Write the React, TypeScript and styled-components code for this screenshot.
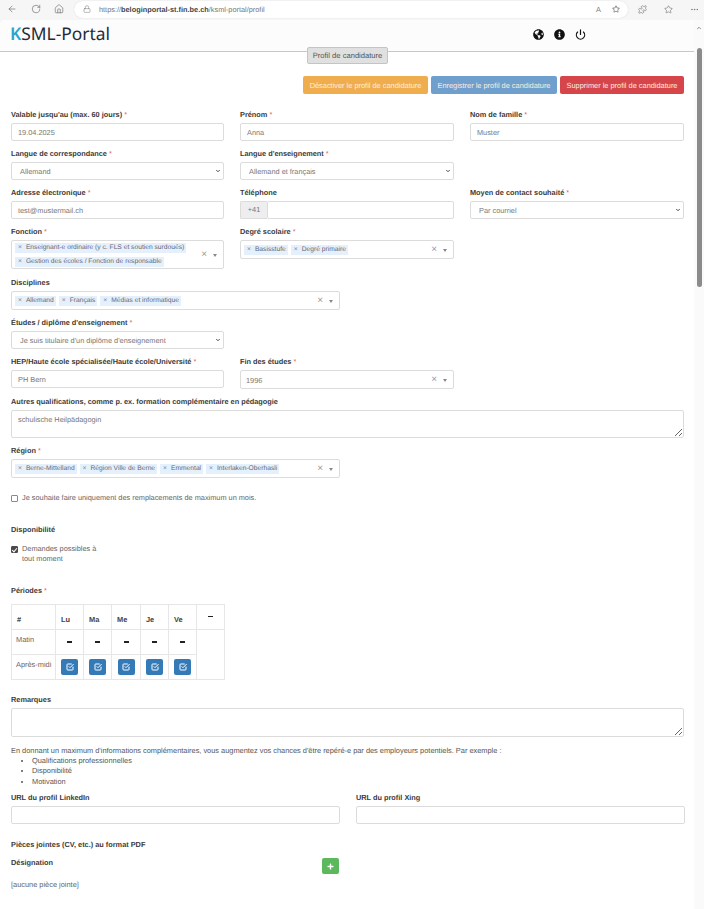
import React from "react";
import styled, { createGlobalStyle } from "styled-components";
import { ArrowLeft, RotateCw, Home, Lock, Star, MoreHorizontal, Puzzle, Power, ChevronUp, ChevronDown } from "lucide-react";
import { FaGlobeAmericas, FaInfoCircle, FaPlus, FaRegStar } from "react-icons/fa";
import { FiCheckSquare } from "react-icons/fi";

const GlobalStyle = createGlobalStyle`
  html, body { margin: 0; padding: 0; background: #f6f6f6; }
  body { font-family: "Liberation Sans", Arial, sans-serif; color: #555; width: 704px; height: 909px; overflow: hidden; }
  * { box-sizing: border-box; text-rendering: geometricPrecision; }
`;
const BrowserBar = styled.div`
  height: 20px;
  display: flex;
  align-items: center;
  padding: 0 0 2px 7px;
  color: #666;
  background: #f6f6f6;
`;
const NavIcons = styled.div`
  display: flex;
  gap: 13.5px;
  width: 67px;
  flex: none;
  svg { width: 10px; height: 10px; }
`;
const UrlBar = styled.div`
  width: 554px;
  height: 17px;
  flex: none;
  border-radius: 9px;
  background: #fff;
  box-shadow: 0 0 1px #ccc;
  display: flex;
  align-items: center;
  padding: 0 8px 0 9px;
  font-size: 7.35px;
  color: #777;
  svg { width: 8px; height: 8px; }
`;
const UrlText = styled.span`
  margin-left: 8px;
  flex: 1;
  b { color: #444; font-weight: 700; }
`;
const UrlRight = styled.div`
  display: flex;
  gap: 11px;
  align-items: center;
`;
const BarTools = styled.div`
  display: flex;
  gap: 17px;
  margin-left: 10px;
  flex: none;
  svg { width: 9px; height: 9px; }
`;
const Shell = styled.div`
  display: flex;
  height: 889px;
`;
const Page = styled.div`
  flex: 1;
  background: #fff;
  border-top-left-radius: 5px;
  min-width: 0;
`;
const Scrollbar = styled.div`
  width: 10px;
  background: #fafafa;
  padding: 5px 2px 0 3px;
  color: #666;
  svg { display: block; width: 6px; height: 6px; margin: 0 0 17px -1px; }
`;
const Thumb = styled.div`
  width: 5px;
  height: 239px;
  border-radius: 3px;
  background: #8b8b8b;
`;
const Header = styled.header`
  height: 32px;
  background: #fcfcfc;
  border-bottom: 1px solid #c8c8c8;
  display: flex;
  align-items: center;
  padding: 0 0 1px 10px;
  border-top-left-radius: 5px;
`;
const Logo = styled.div`
  font-family: "Noto Sans", sans-serif;
  font-size: 17.4px;
  color: #1f2b3c;
  width: 523px;
  line-height: 1;
  span { color: #29a6cf; font-weight: 600; }
`;
const HeaderIcons = styled.div`
  display: flex;
  gap: 10px;
  margin-top: -2px;
  color: #111;
  svg { width: 11px; height: 11px; display: block; }
`;
const TabRow = styled.div`
  display: flex;
  justify-content: center;
  margin-top: -5px;
  padding-left: 1px;
`;
const Tab = styled.div`
  width: 81px;
  height: 17px;
  border: 1px solid #c4c4c4;
  border-radius: 2px;
  background: #e0e0e0;
  font-size: 7.6px;
  line-height: 15px;
  text-align: center;
  color: #555;
`;
const Actions = styled.div`
  display: flex;
  justify-content: flex-end;
  gap: 3px;
  padding-right: 10px;
  margin: 12px 0 17px;
`;
const ActionButton = styled.button<{ $bg: string; $w: number }>`
  width: ${({ $w }) => $w}px;
  height: 18px;
  border: 0;
  border-radius: 2px;
  padding: 0;
  background: ${({ $bg }) => $bg};
  color: #fbeee0;
  white-space: nowrap;
  font: 7.4px "Liberation Sans", Arial, sans-serif;
`;
const Form = styled.div`
  padding: 0 10px 0 11px;
`;
const Row = styled.div<{ $cols?: string; $mb?: number }>`
  display: grid;
  grid-template-columns: ${({ $cols }) => $cols || "213px 214px 214px"};
  column-gap: 16px;
  margin-bottom: ${({ $mb }) => $mb ?? 9}px;
  align-items: start;
`;
const Field = styled.div`
  min-width: 0;
`;
const Label = styled.div`
  font-size: 7.35px;
  line-height: 8px;
  height: 8px;
  margin-bottom: 4px;
  font-weight: 700;
  color: #3a3a3a;
  white-space: nowrap;
`;
const Req = styled.span`
  color: #d9534f;
  font-weight: 400;
`;
const inputCss = `
  width: 100%;
  height: 18px;
  border: 1px solid #dcdcdc;
  border-radius: 2px;
  background: #fff;
  padding: 0 6px;
  font: 7.35px "Liberation Sans", Arial, sans-serif;
  color: #777;
  display: block;
  outline: none;
`;
const Input = styled.input`
  ${inputCss}
`;
const SelectWrap = styled.div`
  position: relative;
  svg {
    position: absolute;
    right: 3px;
    top: 6px;
    width: 6px;
    height: 6px;
    color: #333;
    pointer-events: none;
  }
`;
const Select = styled.select`
  ${inputCss}
  appearance: none;
  padding: 0 8px;
`;
const Area = styled.textarea<{ $h: number }>`
  ${inputCss}
  height: ${({ $h }) => $h}px;
  padding: 4px 6px;
  resize: vertical;
`;
const InputGroup = styled.div`
  display: flex;
`;
const Addon = styled.div`
  width: 27px;
  height: 18px;
  background: #eee;
  border: 1px solid #dcdcdc;
  border-right: 0;
  border-radius: 2px 0 0 2px;
  font-size: 7.35px;
  line-height: 16px;
  text-align: center;
  color: #777;
  flex: none;
`;
const TagBox = styled.div<{ $w?: number }>`
  width: ${({ $w }) => ($w ? `${$w}px` : "100%")};
  min-height: 19px;
  border: 1px solid #dcdcdc;
  border-radius: 2px;
  display: flex;
  align-items: center;
  padding: 2px 4px 1px 3px;
`;
const Tags = styled.div`
  flex: 1;
  display: flex;
  flex-wrap: wrap;
  gap: 4px 3px;
`;
const Tag = styled.span`
  height: 10px;
  background: #e4f0fb;
  font-size: 6.7px;
  line-height: 10px;
  padding: 0 2px 0 3px;
  color: #667;
  white-space: nowrap;
  i { font-style: normal; margin-right: 4px; color: #778; }
`;
const SingleValue = styled.div`
  flex: 1;
  font-size: 7.35px;
  color: #777;
  padding-left: 2px;
`;
const Clear = styled.span`
  font-size: 10px;
  line-height: 10px;
  color: #999;
  margin-right: 6px;
`;
const Caret = styled.span`
  width: 0;
  height: 0;
  margin: 0 2px 0 0;
  border-left: 2.5px solid transparent;
  border-right: 2.5px solid transparent;
  border-top: 3px solid #888;
`;
const CheckLine = styled.label<{ $mt: number; $mb: number; $w?: number }>`
  display: flex;
  align-items: flex-start;
  font-size: 7.35px;
  line-height: 10.5px;
  color: #666;
  margin: ${({ $mt, $mb }) => `${$mt}px 0 ${$mb}px`};
  width: ${({ $w }) => ($w ? `${$w}px` : "auto")};
`;
const Check = styled.input`
  appearance: none;
  width: 7px;
  height: 7px;
  margin: 2px 4px 0 0;
  flex: none;
  border: 1px solid #8a8a8a;
  border-radius: 1px;
  background: #fff;
  position: relative;
  &:checked { background: #4a4a4a; border-color: #4a4a4a; }
  &:checked::after {
    content: "";
    position: absolute;
    left: 1px;
    top: 0;
    width: 2px;
    height: 4px;
    border: solid #fff;
    border-width: 0 1px 1px 0;
    transform: rotate(40deg);
  }
`;
const Table = styled.table`
  width: 214px;
  height: 76px;
  border-collapse: collapse;
  table-layout: fixed;
  margin: 9px 0 16px;
  font-size: 7.4px;
  color: #666;
  td, th { border: 1px solid #e6e6e6; padding: 0; height: 25px; }
`;
const HeadCell = styled.th<{ $w: number }>`
  width: ${({ $w }) => $w}px;
  font-weight: 700;
  color: #444;
  text-align: left;
  vertical-align: bottom;
  padding: 0 0 5px 5px !important;
`;
const MinusHead = styled.th`
  vertical-align: top;
  line-height: 8px;
  padding-top: 8px !important;
`;
const RowName = styled.td`
  vertical-align: top;
  white-space: nowrap;
  padding: 5px 0 0 4px !important;
`;
const SlotCell = styled.td`
  text-align: center;
  vertical-align: middle;
`;
const Dash = styled.span`
  display: inline-block;
  width: 5px;
  height: 1.5px;
  background: #222;
  vertical-align: middle;
`;
const SlotButton = styled.span`
  display: inline-flex;
  align-items: center;
  justify-content: center;
  width: 17px;
  height: 16px;
  border-radius: 2px;
  background: #337ab7;
  color: #fff;
  vertical-align: middle;
  svg { width: 8px; height: 8px; }
`;
const Hint = styled.div`
  font-size: 7.4px;
  line-height: 10.4px;
  color: #555;
  margin: 9px 0 7px;
`;
const HintList = styled.ul`
  margin: 0;
  padding: 0 0 0 21px;
`;
const SectionTitle = styled.div<{ $mt: number; $mb: number }>`
  font-size: 7.35px;
  line-height: 8px;
  font-weight: 700;
  color: #3a3a3a;
  margin: ${({ $mt, $mb }) => `${$mt}px 0 ${$mb}px`};
`;
const AttachRow = styled.div`
  width: 328px;
  display: flex;
  justify-content: space-between;
  align-items: flex-start;
  height: 16px;
  & > div:first-child { margin-top: 1px; }
`;
const AddButton = styled.span`
  width: 17px;
  height: 16px;
  border-radius: 2px;
  background: #5cb85c;
  color: #fff;
  display: flex;
  align-items: center;
  justify-content: center;
  svg { width: 7px; height: 7px; }
`;
const None = styled.div`
  font-size: 7.4px;
  line-height: 10px;
  color: #666;
  margin-top: 6px;
`;

const days = ["Lu", "Ma", "Me", "Je", "Ve"];
const widths = [28, 28, 29, 28, 28];

const Multi = ({ items, w, value }: { items?: string[]; w?: number; value?: string }) => (
  <TagBox $w={w}>
    {value ? (
      <SingleValue>{value}</SingleValue>
    ) : (
      <Tags>
        {(items || []).map((t) => (
          <Tag key={t}>
            <i>×</i>
            {t}
          </Tag>
        ))}
      </Tags>
    )}
    <Clear>×</Clear>
    <Caret />
  </TagBox>
);

const Dropdown = ({ value }: { value: string }) => (
  <SelectWrap>
    <Select defaultValue={value}>
      <option>{value}</option>
    </Select>
    <ChevronDown strokeWidth={3.5} />
  </SelectWrap>
);

export default function App() {
  return (
    <>
      <GlobalStyle />
      <BrowserBar>
        <NavIcons>
          <ArrowLeft strokeWidth={1.5} />
          <RotateCw strokeWidth={1.5} />
          <Home strokeWidth={1.5} />
        </NavIcons>
        <UrlBar>
          <Lock strokeWidth={1.5} />
          <UrlText>
            https://<b>beloginportal-st.fin.be.ch</b>/ksml-portal/profil
          </UrlText>
          <UrlRight>
            <span>A</span>
            <FaRegStar />
          </UrlRight>
        </UrlBar>
        <BarTools>
          <Puzzle strokeWidth={1.5} />
          <Star strokeWidth={1.5} />
          <MoreHorizontal strokeWidth={1.5} />
        </BarTools>
      </BrowserBar>
      <Shell>
        <Page>
          <Header>
            <Logo>
              <span>K</span>SML-Portal
            </Logo>
            <HeaderIcons>
              <FaGlobeAmericas />
              <FaInfoCircle />
              <Power strokeWidth={2.6} />
            </HeaderIcons>
          </Header>
          <TabRow>
            <Tab>Profil de candidature</Tab>
          </TabRow>
          <Actions>
            <ActionButton $bg="#f0ad4e" $w={125}>Désactiver le profil de candidature</ActionButton>
            <ActionButton $bg="#6f9fcd" $w={126}>Enregistrer le profil de candidature</ActionButton>
            <ActionButton $bg="#d64549" $w={124}>Supprimer le profil de candidature</ActionButton>
          </Actions>
          <Form>
            <Row>
              <Field>
                <Label>Valable jusqu'au (max. 60 jours) <Req>*</Req></Label>
                <Input defaultValue="19.04.2025" />
              </Field>
              <Field>
                <Label>Prénom <Req>*</Req></Label>
                <Input defaultValue="Anna" />
              </Field>
              <Field>
                <Label>Nom de famille <Req>*</Req></Label>
                <Input defaultValue="Muster" />
              </Field>
            </Row>
            <Row>
              <Field>
                <Label>Langue de correspondance <Req>*</Req></Label>
                <Dropdown value="Allemand" />
              </Field>
              <Field>
                <Label>Langue d'enseignement <Req>*</Req></Label>
                <Dropdown value="Allemand et français" />
              </Field>
            </Row>
            <Row>
              <Field>
                <Label>Adresse électronique <Req>*</Req></Label>
                <Input defaultValue="test@mustermail.ch" />
              </Field>
              <Field>
                <Label>Téléphone</Label>
                <InputGroup>
                  <Addon>+41</Addon>
                  <Input />
                </InputGroup>
              </Field>
              <Field>
                <Label>Moyen de contact souhaité <Req>*</Req></Label>
                <Dropdown value="Par courriel" />
              </Field>
            </Row>
            <Row $mb={10}>
              <Field>
                <Label>Fonction <Req>*</Req></Label>
                <Multi items={["Enseignant-e ordinaire (y c. FLS et soutien surdoués)", "Gestion des écoles / Fonction de responsable"]} />
              </Field>
              <Field>
                <Label>Degré scolaire <Req>*</Req></Label>
                <Multi items={["Basisstufe", "Degré primaire"]} />
              </Field>
            </Row>
            <Row $cols="1fr" $mb={9}>
              <Field>
                <Label>Disciplines</Label>
                <Multi w={329} items={["Allemand", "Français", "Médias et informatique"]} />
              </Field>
            </Row>
            <Row $mb={9}>
              <Field>
                <Label>Études / diplôme d'enseignement <Req>*</Req></Label>
                <Dropdown value="Je suis titulaire d'un diplôme d'enseignement" />
              </Field>
            </Row>
            <Row $mb={9}>
              <Field>
                <Label>HEP/Haute école spécialisée/Haute école/Université <Req>*</Req></Label>
                <Input defaultValue="PH Bern" />
              </Field>
              <Field>
                <Label>Fin des études <Req>*</Req></Label>
                <Multi value="1996" />
              </Field>
            </Row>
            <Row $cols="1fr" $mb={9}>
              <Field>
                <Label>Autres qualifications, comme p. ex. formation complémentaire en pédagogie</Label>
                <Area $h={28} defaultValue="schulische Heilpädagogin" />
              </Field>
            </Row>
            <Row $cols="1fr" $mb={0}>
              <Field>
                <Label>Région <Req>*</Req></Label>
                <Multi w={329} items={["Berne-Mittelland", "Région Ville de Berne", "Emmental", "Interlaken-Oberhasli"]} />
              </Field>
            </Row>
            <CheckLine $mt={15} $mb={22}>
              <Check type="checkbox" />
              Je souhaite faire uniquement des remplacements de maximum un mois.
            </CheckLine>
            <SectionTitle $mt={0} $mb={10}>Disponibilité</SectionTitle>
            <CheckLine $mt={0} $mb={22} $w={90}>
              <Check type="checkbox" defaultChecked />
              <span>Demandes possibles à tout moment</span>
            </CheckLine>
            <Label>Périodes <Req>*</Req></Label>
            <Table>
              <thead>
                <tr>
                  <HeadCell $w={44}>#</HeadCell>
                  {days.map((d, i) => (
                    <HeadCell key={d} $w={widths[i]}>{d}</HeadCell>
                  ))}
                  <MinusHead><Dash /></MinusHead>
                </tr>
              </thead>
              <tbody>
                <tr>
                  <RowName>Matin</RowName>
                  {days.map((d) => (
                    <SlotCell key={d}><Dash /></SlotCell>
                  ))}
                  <td rowSpan={2} />
                </tr>
                <tr>
                  <RowName>Après-midi</RowName>
                  {days.map((d) => (
                    <SlotCell key={d}>
                      <SlotButton><FiCheckSquare strokeWidth={3} /></SlotButton>
                    </SlotCell>
                  ))}
                </tr>
              </tbody>
            </Table>
            <Label>Remarques</Label>
            <Area $h={29} />
            <Hint>
              En donnant un maximum d'informations complémentaires, vous augmentez vos chances d'être repéré-e par des employeurs potentiels. Par exemple :
              <HintList>
                <li>Qualifications professionnelles</li>
                <li>Disponibilité</li>
                <li>Motivation</li>
              </HintList>
            </Hint>
            <Row $cols="329px 329px" $mb={0}>
              <Field>
                <Label>URL du profil LinkedIn</Label>
                <Input />
              </Field>
              <Field>
                <Label>URL du profil Xing</Label>
                <Input />
              </Field>
            </Row>
            <SectionTitle $mt={17} $mb={9}>Pièces jointes (CV, etc.) au format PDF</SectionTitle>
            <AttachRow>
              <Label>Désignation</Label>
              <AddButton><FaPlus /></AddButton>
            </AttachRow>
            <None>[aucune pièce jointe]</None>
          </Form>
        </Page>
        <Scrollbar>
          <ChevronUp strokeWidth={3} />
          <Thumb />
        </Scrollbar>
      </Shell>
    </>
  );
}
